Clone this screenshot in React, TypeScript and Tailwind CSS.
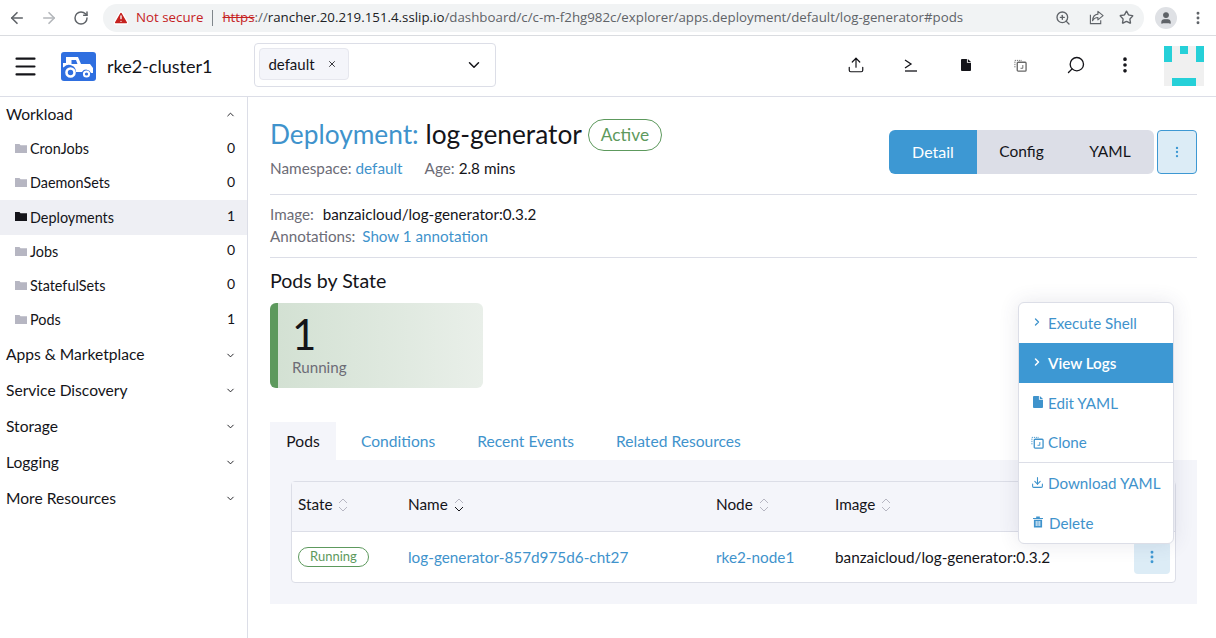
import { ArrowLeft, ArrowRight, RotateCw, TriangleAlert, ZoomIn, Star, User, EllipsisVertical, ChevronDown, ChevronUp, ChevronRight, Menu, Upload, X, Search, Download } from 'lucide-react';

const workload = [
  { name: 'CronJobs', count: 0 },
  { name: 'DaemonSets', count: 0 },
  { name: 'Deployments', count: 1, active: true },
  { name: 'Jobs', count: 0 },
  { name: 'StatefulSets', count: 0 },
  { name: 'Pods', count: 1 },
];

const groups = ['Apps & Marketplace', 'Service Discovery', 'Storage', 'Logging', 'More Resources'];

function CloneIcon({ className }: { className?: string }) {
  return (
    <svg viewBox="0 0 14 14" className={className} fill="none" stroke="currentColor">
      <path d="M1 9V1.5h7.5" strokeDasharray="1.4 1" />
      <rect x="3.5" y="3.5" width="9.5" height="9.5" rx="1" strokeWidth="1.4" />
      <path d="M9.5 6.5v3.5H7" />
    </svg>
  );
}

function DocIcon({ className }: { className?: string }) {
  return (
    <svg viewBox="0 0 11 13" className={className} fill="currentColor">
      <path d="M1 0h5.5v4H11v8a1 1 0 0 1-1 1H1a1 1 0 0 1-1-1V1a1 1 0 0 1 1-1z" />
      <path d="M7.5 0L11 3.2H7.5z" />
    </svg>
  );
}

function TrashIcon({ className }: { className?: string }) {
  return (
    <svg viewBox="0 0 11 12" className={className} fill="currentColor">
      <path d="M0 1.5h3.5V0h4v1.5H11v1.2H0z" />
      <path fillRule="evenodd" d="M1 3.5h9V12H1zM3 5v5.5h1V5zM5 5v5.5h1V5zM7 5v5.5h1V5z" />
    </svg>
  );
}

function FolderIcon({ className }: { className?: string }) {
  return (
    <svg viewBox="0 0 12 10" className={className} fill="currentColor">
      <path d="M0 1h4.5l1 1.2H12V10H0z" />
    </svg>
  );
}

function ShareBox({ className }: { className?: string }) {
  return (
    <svg viewBox="0 0 16 16" className={className} fill="none" stroke="currentColor" strokeWidth="1.2">
      <path d="M1.5 5v9.5h11V11" />
      <path d="M9.5 1.5L15 6l-5.5 4.5V8C7 8 5 9 3.8 11.5 4 7.5 6 4.8 9.5 4.4z" strokeLinejoin="round" />
    </svg>
  );
}

function Tractor() {
  return (
    <svg viewBox="0 0 35 29" className="w-[35px] h-[29px]">
      <rect width="35" height="29" rx="3" fill="#2f6fe0" />
      <path fillRule="evenodd" fill="#fff" d="M5 5h12l3 7h9l3 4v5h-2a5 5 0 0 0-9-1h-6a7 7 0 0 0-12-5 7 7 0 0 0-1 .5V11h3V8H5zM10.500 8v4h6l-1.500-4z" />
      <circle cx="9.500" cy="20.500" r="4" fill="none" stroke="#fff" strokeWidth="2.600" />
      <circle cx="25.500" cy="22" r="2.600" fill="none" stroke="#fff" strokeWidth="2" />
    </svg>
  );
}

function SortIcon({ dark }: { dark?: boolean }) {
  return (
    <svg viewBox="0 0 10 14" className="w-[10px] h-[14px]" fill="none" strokeWidth="1" stroke={dark ? '#141419' : '#b6b6c2'}>
      <path d="M1 5l4-4 4 4" stroke="#b6b6c2" />
      <path d="M1 9l4 4 4-4" />
    </svg>
  );
}

function Avatar() {
  return (
    <svg viewBox="0 0 40 40" className="w-10 h-10" shapeRendering="crispEdges">
      <rect width="40" height="40" fill="#f0f0f0" />
      <rect x="0" y="0" width="8" height="16" fill="#26d0d8" />
      <rect x="32" y="0" width="8" height="16" fill="#26d0d8" />
      <rect x="16" y="0" width="8" height="8" fill="#26d0d8" />
      <rect x="8" y="32" width="24" height="8" fill="#26d0d8" />
    </svg>
  );
}

function ChromeBar() {
  return (
    <div className="h-9 flex items-center border-b border-[#dadce0] bg-white font-['Open_Sans',sans-serif] text-[13.3px]">
      <ArrowLeft className="w-[18px] h-[18px] ml-[8px] text-[#5f6368]" strokeWidth={2.2} />
      <ArrowRight className="w-[18px] h-[18px] ml-[14px] text-[#b4b7bb]" strokeWidth={2.2} />
      <RotateCw className="w-[16px] h-[16px] ml-[15px] text-[#5f6368]" strokeWidth={2.2} />
      <div className="ml-[14px] w-[1041px] h-7 rounded-full bg-[#f1f3f4] flex items-center pl-[10px] pr-[10px] shrink-0">
        <TriangleAlert className="w-[16px] h-[16px] text-white fill-[#c5221f]" />
        <span className="ml-[7px] text-[#c5221f]">Not secure</span>
        <span className="mx-[9px] w-px h-4 bg-[#80868b]" />
        <span className="text-[#c5221f] line-through">https</span>
        <span className="text-[#5f6368]">://<span className="text-[#202124]">rancher.20.219.151.4.sslip.io</span>/dashboard/c/c-m-f2hg982c/explorer/apps.deployment/default/log-generator#pods</span>
        <ZoomIn className="w-[16px] h-[16px] ml-auto text-[#5f6368]" />
        <ShareBox className="w-[15px] h-[15px] ml-[18px] text-[#5f6368]" />
        <Star className="w-[15px] h-[15px] ml-[15px] text-[#5f6368]" strokeWidth={2.2} />
      </div>
      <div className="ml-[11px] w-[22px] h-[22px] rounded-full bg-[#dfe1e5] flex items-center justify-center">
        <User className="w-[14px] h-[14px] text-[#5f6368] fill-[#5f6368]" />
      </div>
      <EllipsisVertical className="w-4 h-4 ml-[13px] text-[#5f6368]" strokeWidth={2.4} />
    </div>
  );
}

function Header() {
  return (
    <div className="h-[61px] flex items-center border-b border-[#dcdee7] text-[#141419]">
      <Menu className="w-[27px] h-[27px] ml-[12px]" strokeWidth={1.9} />
      <div className="ml-[22px]"><Tractor /></div>
      <span className="ml-[11px] text-[18px]">rke2-cluster1</span>
      <div className="ml-[42px] w-[242px] h-[44px] mb-[2px] border border-[#dcdee7] rounded flex items-center pl-[4px] pr-[12px]">
        <div className="h-[32px] w-[90px] rounded-sm bg-[#f4f5fa] border border-[#e6e7ee] flex items-center px-2 text-[15px] mb-[2px]">
          default
          <X className="w-[10px] h-[10px] ml-[12px]" strokeWidth={2} />
        </div>
        <ChevronDown className="w-[18px] h-[18px] ml-auto" strokeWidth={2} />
      </div>
      <Upload className="w-[18px] h-[18px] ml-[351px] mb-[2px]" strokeWidth={1.6} />
      <span className="ml-[39px] w-[14px] h-[16px] mb-[2px]">
        <svg viewBox="0 0 14 16" className="w-[14px] h-[16px]" fill="none" stroke="currentColor" strokeWidth="1.3">
          <path d="M1 3l6 4-6 4" />
          <path d="M1 14h12" />
        </svg>
      </span>
      <DocIcon className="w-[10px] h-[12px] ml-[43px] mb-[2px] text-[#141419]" />
      <CloneIcon className="w-[13px] h-[13px] ml-[43px] mb-[2px] text-[#666]" />
      <Search className="w-[20px] h-[20px] ml-[39px] mb-[2px] -scale-x-100" strokeWidth={1.6} />
      <EllipsisVertical className="w-[20px] h-[20px] ml-[29px] mb-[2px]" strokeWidth={2.4} />
      <div className="ml-[29px]"><Avatar /></div>
    </div>
  );
}

function Sidebar() {
  return (
    <aside className="w-[248px] shrink-0 border-r border-[#dcdee7] text-[#141419]">
      <div className="h-[35px] flex items-center justify-between pl-[6px] pr-[11px] text-[15.6px]">
        Workload
        <ChevronUp className="w-[11px] h-[11px]" strokeWidth={2} />
      </div>
      {workload.map((item) => (
        <div key={item.name} className={`h-[34.2px] flex items-center justify-between pl-[15px] pr-[12px] text-[14.4px] ${item.active ? 'bg-[#eeeff4]' : ''}`}>
          <span className="flex items-center">
            <FolderIcon className={`w-[12px] h-[10px] mr-[3px] -translate-y-px ${item.active ? 'text-[#141419]' : 'text-[#b6b6c2]'}`} />
            {item.name}
          </span>
          <span className="text-[14px] -translate-y-0.5">{item.count}</span>
        </div>
      ))}
      {groups.map((g) => (
        <div key={g} className="h-[35.8px] flex items-center justify-between pl-[6px] pr-[11px] text-[15.6px]">
          {g}
          <ChevronDown className="w-[11px] h-[11px]" strokeWidth={2} />
        </div>
      ))}
    </aside>
  );
}

function ActionMenu() {
  const rowClass = 'h-10 flex items-center text-[#3f93cc] text-[15.2px]';
  return (
    <div className="absolute left-[770px] top-[205px] w-[156px] h-[242px] bg-white rounded-md border border-[#dcdee7] shadow-[0_0_20px_rgba(60,60,100,0.12)] z-10">
      <div className={`${rowClass} pl-[12px]`}><ChevronRight className="w-[12px] h-[12px] mr-[5px] -translate-y-px" strokeWidth={2.6} />Execute Shell</div>
      <div className="h-10 flex items-center pl-[12px] text-[15.2px] font-semibold text-white bg-[#3d98d3]"><ChevronRight className="w-[12px] h-[12px] mr-[5px] -translate-y-px" strokeWidth={3} />View Logs</div>
      <div className={`${rowClass} pl-[14px]`}><DocIcon className="w-[10px] h-[12px] mr-[5px] -translate-y-px" />Edit YAML</div>
      <div className={`${rowClass} pl-[12px] border-b border-[#dcdee7]`}><CloneIcon className="w-[13px] h-[13px] mr-[4px]" />Clone</div>
      <div className={`${rowClass} pl-[12px]`}><Download className="w-[13px] h-[13px] mr-[4px] -translate-y-px" strokeWidth={2} />Download YAML</div>
      <div className={`${rowClass} pl-[14px]`}><TrashIcon className="w-[10px] h-[12px] mr-[6px] -translate-y-px" />Delete</div>
    </div>
  );
}

function Main() {
  return (
    <main className="relative flex-1 pl-[22px] pr-[19px] text-[#141419]">
      <div className="flex items-start justify-between h-[98px] border-b border-[#dcdee7]">
        <div>
          <div className="flex items-center mt-[23px] h-[30px]">
            <h1 className="text-[26.3px]"><span className="text-[#3f93cc]">Deployment:</span> log-generator</h1>
            <span className="ml-[6px] h-[32px] w-[74px] flex items-center justify-center rounded-full border border-[#5d995d] text-[#5d995d] text-[17.3px]">Active</span>
          </div>
          <div className="mt-[7px] text-[15.3px] text-[#6c6c76]">
            Namespace: <span className="text-[#3f93cc]">default</span>
            <span className="ml-[22px]">Age:</span> <span className="text-[#141419]">2.8 mins</span>
          </div>
        </div>
        <div className="flex mt-[33px]">
          <div className="w-[88px] h-[44px] bg-[#3d98d3] text-white rounded-l-md flex items-center justify-center text-[16px]">Detail</div>
          <div className="w-[89px] h-[44px] bg-[#dcdee7] flex items-center justify-center text-[15.5px]">Config</div>
          <div className="w-[88px] h-[44px] bg-[#dcdee7] rounded-r-md flex items-center justify-center text-[15.5px]">YAML</div>
          <div className="ml-[3px] w-[40px] h-[44px] rounded-sm border border-[#3d98d3] bg-[#dcecf6] flex items-center justify-center">
            <EllipsisVertical className="w-[14px] h-[14px] text-[#3d98d3]" />
          </div>
        </div>
      </div>
      <div className="h-[63px] border-b border-[#dcdee7] pt-[8px] text-[15.2px] leading-[22px] text-[#6c6c76]">
        <div>Image: <span className="ml-[5px] text-[#141419]">banzaicloud/log-generator:0.3.2</span></div>
        <div>Annotations: <span className="ml-[3px] text-[#3f93cc]">Show 1 annotation</span></div>
      </div>
      <h2 className="mt-[11px] text-[19.600px] leading-[24px]">Pods by State</h2>
      <div className="mt-[10px] w-[213px] h-[85px] rounded-md border-l-[8px] border-[#5d995d] bg-gradient-to-r from-[#d3e1d3] to-[#e9efe9] pl-[14px] pt-[10px]">
        <div className="text-[42px] leading-[42px]">1</div>
        <div className="text-[15.2px] leading-[20px] text-[#6c6c76] mt-[2px]">Running</div>
      </div>
      <div className="mt-[34px] flex h-[38px] text-[15.600px] text-[#3f93cc]">
        <div className="w-[66px] pt-[2px] bg-[#f4f5fa] flex items-center justify-center text-[#141419]">Pods</div>
        <div className="ml-[25px] pt-[2px] flex items-center">Conditions</div>
        <div className="ml-[42px] pt-[2px] flex items-center">Recent Events</div>
        <div className="ml-[42px] pt-[2px] flex items-center">Related Resources</div>
      </div>
      <section className="bg-[#f4f5fa] h-[144px] pt-[21px] px-[21px]">
        <div className="h-[102px] rounded border border-[#dcdee7] bg-white">
          <div className="h-[50px] pb-[4px] bg-[#f4f5fa] border-b border-[#dcdee7] flex items-center text-[15.3px]">
            <span className="ml-[6px] flex items-center gap-[6px] w-[110px]">State <SortIcon /></span>
            <span className="flex items-center gap-[6px] w-[308px]">Name <SortIcon dark /></span>
            <span className="flex items-center gap-[6px] w-[119px]">Node <SortIcon /></span>
            <span className="flex items-center gap-[6px]">Image <SortIcon /></span>
          </div>
          <div className="h-[50px] flex items-center text-[15.3px]">
            <span className="ml-[6px] w-[71px] h-[20px] rounded-full border border-[#5d995d] text-[#5d995d] text-[13px] flex items-center justify-center">Running</span>
            <span className="ml-[39px] w-[308px] text-[#3f93cc]">log-generator-857d975d6-cht27</span>
            <span className="w-[119px] text-[#3f93cc]">rke2-node1</span>
            <span>banzaicloud/log-generator:0.3.2</span>
            <div className="ml-auto mr-[5px] w-[36px] h-[33px] rounded-sm bg-[#dcecf6] flex items-center justify-center">
              <EllipsisVertical className="w-[16px] h-[16px] text-[#3d98d3]" strokeWidth={2.4} />
            </div>
          </div>
        </div>
      </section>
      <ActionMenu />
    </main>
  );
}

export default function App() {
  return (
    <div className="w-[1216px] h-[638px] overflow-hidden bg-white font-['Lato',sans-serif]">
      <ChromeBar />
      <Header />
      <div className="flex h-[541px]">
        <Sidebar />
        <Main />
      </div>
    </div>
  );
}
